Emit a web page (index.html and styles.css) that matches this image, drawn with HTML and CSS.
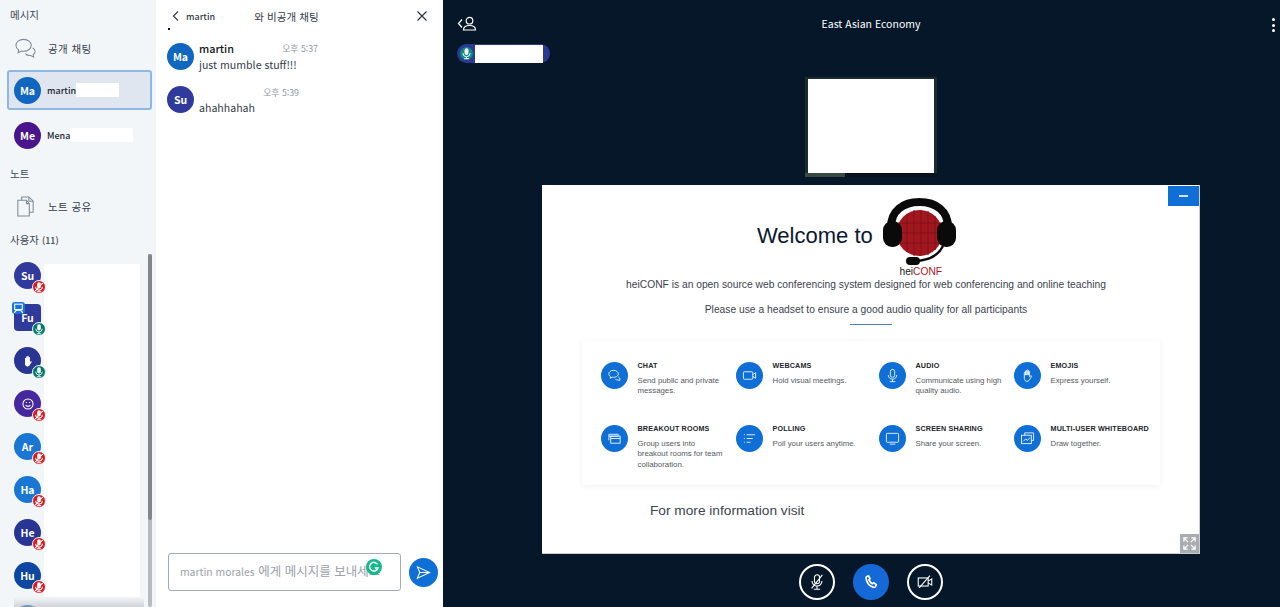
FILE: index.html
```html
<!DOCTYPE html>
<html lang="ko">
<head>
  <meta charset="UTF-8">
  <title>East Asian Economy</title>
  <link rel="stylesheet" href="styles.css">
</head>
<body>
  <svg class="defs" width="0" height="0">
    <symbol id="mic" viewBox="0 0 16 16">
      <rect x="5.6" y="1.5" width="4.8" height="8.4" rx="2.4" fill="currentColor"/>
      <path d="M3.6 7.6a4.4 4.4 0 0 0 8.8 0M8 12v2.4M5 14.4h6" fill="none" stroke="currentColor" stroke-width="1.2"/>
    </symbol>
    <symbol id="mic-off" viewBox="0 0 16 16">
      <rect x="5.6" y="1.5" width="4.8" height="8.4" rx="2.4" fill="currentColor"/>
      <path d="M3.6 7.6a4.4 4.4 0 0 0 8.8 0M8 12v2.4M5 14.4h6M3 13.5 13 2.5" fill="none" stroke="currentColor" stroke-width="1.4"/>
    </symbol>
    <symbol id="hand" viewBox="0 0 16 16">
      <path d="M4.6 8.6V5a.7.7 0 0 1 1.400 0v2.600V3.400a.7.7 0 0 1 1.400 0v4.200V2.800a.7.7 0 0 1 1.400 0v4.800V4a.7.7 0 0 1 1.400 0v5.400l1-1c.6-.6 1.500.1 1 .8l-2.500 4c-.5.7-1.200 1-2.100 1-2 0-3-1.300-3-3.200z"/>
    </symbol>
  </svg>

  <aside class="sidebar">
    <h2 class="side-title">메시지</h2>
    <div class="side-link">
      <svg class="side-icon" viewBox="0 0 24 24" fill="none" stroke="#7f8b98" stroke-width="1.1">
        <path d="M10 2.500c-4.600 0-8 2.800-8 6.200 0 2 1.100 3.700 2.900 4.800l-.6 3 3.400-1.900c.8.2 1.500.3 2.300.3 4.600 0 8-2.800 8-6.200S14.600 2.500 10 2.500z"/>
        <path d="M19.500 11.500c1.500.8 2.500 2.100 2.500 3.600 0 1.300-.7 2.400-1.900 3.200l.4 2.700-3-1.700c-2.300.3-4.500-.5-5.600-2"/>
      </svg>
      <span>공개 채팅</span>
    </div>
    <div class="chat-row active">
      <div class="avatar c-blue">Ma</div>
      <span class="chat-name">martin</span>
      <span class="blank blank-a"></span>
    </div>
    <div class="chat-row">
      <div class="avatar c-purple">Me</div>
      <span class="chat-name">Mena</span>
      <span class="blank blank-b"></span>
    </div>
    <h2 class="side-title notes-title">노트</h2>
    <div class="side-link notes-link">
      <svg class="side-icon" viewBox="0 0 24 24" fill="none" stroke="#7f8b98" stroke-width="1.1">
        <path d="M4 5.500h9l3 3.500v13H4z"/>
        <path d="M8 5.500V2h7.500L20 6.500V18h-4"/>
        <path d="M15.500 2v4.500H20M13 5.500V9h3"/>
      </svg>
      <span>노트 공유</span>
    </div>
    <h2 class="side-title users-title">사용자 <span class="count">(11)</span></h2>
    <div class="users">
      <div class="user-icons">
        <div class="avatar c-indigo">Su<svg class="badge off"><use href="#mic-off"/></svg></div>
        <div class="avatar c-indigo square">Fu
          <span class="presenter">
            <svg viewBox="0 0 12 12" fill="none" stroke="#fff" stroke-width="1"><rect x="2.500" y="2" width="7" height="5"/><path d="M2 10l2-2.500h4l2 2.500"/></svg>
          </span>
          <svg class="badge on"><use href="#mic"/></svg>
        </div>
        <div class="avatar c-navy">
          <svg class="avatar-glyph hand-fill"><use href="#hand"/></svg>
          <svg class="badge on"><use href="#mic"/></svg>
        </div>
        <div class="avatar c-violet">
          <svg class="avatar-glyph" viewBox="0 0 16 16" fill="none" stroke="#fff" stroke-width="1.2"><circle cx="8" cy="8" r="5.8"/><path d="M5.3 9.300c1.300 1.900 4.100 1.900 5.400 0M5.600 6.300h1.200M9.200 6.300h1.200"/></svg>
          <svg class="badge off"><use href="#mic-off"/></svg>
        </div>
        <div class="avatar c-sky">Ar<svg class="badge off"><use href="#mic-off"/></svg></div>
        <div class="avatar c-sky">Ha<svg class="badge off"><use href="#mic-off"/></svg></div>
        <div class="avatar c-navy">He<svg class="badge off"><use href="#mic-off"/></svg></div>
        <div class="avatar c-deep">Hu<svg class="badge off"><use href="#mic-off"/></svg></div>
        <div class="avatar c-blue"></div>
      </div>
      <div class="user-names"></div>
    </div>
    <div class="list-fade"></div>
    <div class="scrollbar"><div class="scroll-thumb"></div></div>
  </aside>

  <section class="chat">
    <header class="chat-head">
      <svg class="chat-back" viewBox="0 0 10 12" fill="none" stroke="#333d4a" stroke-width="1.2"><path d="M7 1.500 2.500 6 7 10.500"/></svg>
      <span class="chat-peer">martin</span>
      <span class="chat-title">와 비공개 채팅</span>
      <svg class="chat-close" viewBox="0 0 12 12" fill="none" stroke="#26303c" stroke-width="1.1"><path d="M1.500 1.500l9 9M10.500 1.500l-9 9"/></svg>
    </header>
    <div class="chat-dot"></div>
    <div class="messages">
      <div class="msg">
        <div class="avatar c-blue">Ma</div>
        <div class="msg-body">
          <div class="msg-meta"><strong>martin</strong><time>오후 5:37</time></div>
          <p>just mumble stuff!!!</p>
        </div>
      </div>
      <div class="msg msg-anon">
        <div class="avatar c-indigo">Su</div>
        <div class="msg-body">
          <div class="msg-meta"><strong></strong><time>오후 5:39</time></div>
          <p>ahahhahah</p>
        </div>
      </div>
    </div>
    <form class="composer">
      <div class="composer-box">
        <span class="placeholder"><span class="latin">martin morales</span> 에게 메시지를 보내세요</span>
        <span class="grammarly">
          <svg viewBox="0 0 16 16" fill="none" stroke="#fff" stroke-width="1.5"><path d="M11.500 5.300A4.300 4.300 0 1 0 12 9H8.800"/></svg>
        </span>
      </div>
      <button class="send" type="button">
        <svg viewBox="0 0 16 16" fill="none" stroke="#fff" stroke-width="1.1"><path d="M1.500 2 14.500 8l-13 6 2.500-6zM4 8h10.500"/></svg>
      </button>
    </form>
  </section>

  <main class="stage">
    <header class="stage-head">
      <svg class="users-toggle" viewBox="0 0 20 15" fill="none" stroke="#fff" stroke-width="1.2">
        <path d="M5 3.500 1.500 7.500 5 11.500"/>
        <circle cx="12.500" cy="4.700" r="3.300"/>
        <path d="M6.500 14c0-3 2.500-4.500 6-4.500s6 1.500 6 4.500z"/>
      </svg>
      <h1>East Asian Economy</h1>
      <div class="kebab"><i></i><i></i><i></i></div>
    </header>
    <div class="talker">
      <span class="talker-mic"><svg><use href="#mic"/></svg></span>
      <span class="talker-name"></span>
    </div>
    <div class="webcam"><div class="webcam-feed"></div></div>
    <div class="slide">
      <button class="minimize" type="button"><span></span></button>
      <div class="welcome">
        <span class="welcome-text">Welcome to</span>
        <div class="logo">
          <svg viewBox="0 0 74 70" width="74" height="70">
            <circle cx="36.500" cy="36" r="23" fill="#a3161f"/>
            <path d="M24 17v38M31 13v46M38 13v46M45 14v44M52 19v34M15 26h43M14 36h45M16 46h41" stroke="#7c1219" stroke-width="1"/>
            <path d="M8 30C8 14 20 5 36.500 5S65 14 65 30" fill="none" stroke="#0a0a0a" stroke-width="8"/>
            <rect x="0" y="24" width="19" height="26" rx="9" fill="#0a0a0a"/>
            <rect x="54" y="24" width="19" height="26" rx="9" fill="#0a0a0a"/>
            <path d="M60 49C54 61 42 64 30 64" fill="none" stroke="#0a0a0a" stroke-width="2.5"/>
            <rect x="23" y="60" width="14" height="8" rx="4" fill="#0a0a0a"/>
          </svg>
          <div class="logo-name">hei<b>CONF</b></div>
        </div>
      </div>
      <p class="lead">heiCONF is an open source web conferencing system designed for web conferencing and online teaching</p>
      <p class="lead lead-second">Please use a headset to ensure a good audio quality for all participants</p>
      <div class="rule"></div>
      <div class="features">
        <div class="feature">
          <span class="feature-icon">
            <svg viewBox="0 0 16 16"><path d="M7 2.500c-3 0-5 1.700-5 3.800 0 1.200.7 2.200 1.700 2.900l-.3 1.800 2.100-1.200c3.400.5 6.500-1 6.500-3.500 0-2.100-2-3.800-5-3.800zM12 9.500c1 .5 1.800 1.300 1.800 2.200l-.4 1.800-1.800-.9c-1 .2-2 0-2.700-.7"/></svg>
          </span>
          <div><h3>CHAT</h3><p>Send public and private messages.</p></div>
        </div>
        <div class="feature">
          <span class="feature-icon">
            <svg viewBox="0 0 16 16"><rect x="1.500" y="4" width="10" height="8" rx="1"/><path d="M11.500 7 14.500 5v6l-3-2"/></svg>
          </span>
          <div><h3>WEBCAMS</h3><p>Hold visual meetings.</p></div>
        </div>
        <div class="feature">
          <span class="feature-icon">
            <svg viewBox="0 0 16 16"><rect x="5.700" y="1.500" width="4.600" height="8.500" rx="2.300"/><path d="M3.500 7.500a4.500 4.500 0 0 0 9 0M8 12v2.500M5 14.500h6"/></svg>
          </span>
          <div><h3>AUDIO</h3><p>Communicate using high quality audio.</p></div>
        </div>
        <div class="feature">
          <span class="feature-icon">
            <svg><use href="#hand"/></svg>
          </span>
          <div><h3>EMOJIS</h3><p>Express yourself.</p></div>
        </div>
        <div class="feature">
          <span class="feature-icon">
            <svg viewBox="0 0 16 16"><path d="M2 10V3.500h10V5"/><path d="M2 5.500h10"/><rect x="4" y="5.500" width="10" height="7.500"/><path d="M4 8h10"/></svg>
          </span>
          <div><h3>BREAKOUT ROOMS</h3><p>Group users into breakout rooms for team collaboration.</p></div>
        </div>
        <div class="feature">
          <span class="feature-icon">
            <svg viewBox="0 0 16 16"><path d="M5 4h9M5 8h6.500M5 12h4M2 4h1M2 8h1M2 12h1"/></svg>
          </span>
          <div><h3>POLLING</h3><p>Poll your users anytime.</p></div>
        </div>
        <div class="feature">
          <span class="feature-icon">
            <svg viewBox="0 0 16 16"><rect x="1.500" y="2.500" width="13" height="9.500" rx=".8"/><path d="M5 14h6"/></svg>
          </span>
          <div><h3>SCREEN SHARING</h3><p>Share your screen.</p></div>
        </div>
        <div class="feature">
          <span class="feature-icon">
            <svg viewBox="0 0 16 16"><path d="M5 4.500V2h9.500v8H12"/><rect x="1.500" y="4.500" width="10.500" height="9"/><path d="M3.500 11l2.500-2.500 2 1.500 2.500-3"/></svg>
          </span>
          <div><h3>MULTI-USER WHITEBOARD</h3><p>Draw together.</p></div>
        </div>
      </div>
      <p class="more">For more information visit</p>
      <button class="fullscreen" type="button">
        <svg viewBox="0 0 16 16" fill="none" stroke="#fff" stroke-width="1.3"><path d="M2 6V2h4M2 2l4.500 4.500M10 2h4v4M14 2 9.500 6.500M2 10v4h4M2 14l4.500-4.500M10 14h4v-4M14 14 9.500 9.500"/></svg>
      </button>
    </div>
    <div class="actions">
      <button class="action" type="button">
        <svg viewBox="0 0 20 20" fill="none" stroke="#fff" stroke-width="1.2"><rect x="7.200" y="2" width="5.600" height="10" rx="2.800"/><path d="M4.500 9a5.500 5.500 0 0 0 11 0M10 14.500V18M6.500 18h7M4 17 16 2"/></svg>
      </button>
      <button class="action action-primary" type="button">
        <svg viewBox="0 0 20 20" fill="none" stroke="#fff" stroke-width="1.9" stroke-linecap="round"><path d="M5.500 3.800 7.300 3.300l1.600 3-1.200 1.300c.7 1.700 2 3.200 3.800 4.300l1.400-1 2.900 1.900-.6 1.900c-.4 1-1.400 1.400-2.400 1.100C8.500 14.600 5.200 10.700 4.500 6c-.1-1 .2-1.800 1-2.200z"/></svg>
      </button>
      <button class="action" type="button">
        <svg viewBox="0 0 20 20" fill="none" stroke="#fff" stroke-width="1.2"><rect x="2.500" y="5.500" width="11" height="9"/><path d="M13.500 9l4-2.500v7l-4-2.500M3.500 16.500 15.500 3"/></svg>
      </button>
    </div>
  </main>
</body>
</html>
```

FILE: styles.css
```css
* {
  box-sizing: border-box;
}
body {
  margin: 0;
  height: 100vh;
  overflow: hidden;
  display: flex;
  font-family: "Noto Sans CJK KR", "Noto Sans", sans-serif;
  color: #26303c;
  background: #06172a;
}
.defs {
  position: absolute;
}
h1, h2, h3, p {
  margin: 0;
  font-weight: 400;
}

/* sidebar */
.sidebar {
  position: relative;
  flex: 0 0 156px;
  height: 100%;
  overflow: hidden;
  background: #f3f6f9;
  padding-top: 7px;
}
.side-title {
  font-size: 10.5px;
  line-height: 15px;
  padding-left: 10px;
  color: #3e4853;
}
.side-link {
  display: flex;
  align-items: center;
  height: 24px;
  margin-top: 14px;
  padding-left: 14px;
  font-size: 10.5px;
  color: #333d4a;
}
.side-link span {
  margin-left: 11px;
  letter-spacing: 0.4px;
}
.side-icon {
  width: 23px;
  height: 23px;
}
.chat-row {
  display: flex;
  align-items: center;
  height: 40px;
  width: 145px;
  margin: 5px 0 0 7px;
  padding-left: 6px;
  border: 1px solid transparent;
  border-radius: 3px;
}
.chat-row.active {
  margin-top: 10px;
  background: #dfe6ef;
  border: 2px solid #8fb7e6;
  padding-left: 5px;
}
.chat-name {
  margin-left: 6px;
  font-size: 9px;
  font-weight: 500;
  color: #1e2730;
}
.blank {
  display: block;
  height: 14px;
  background: #fff;
}
.blank-a {
  width: 43px;
}
.blank-b {
  width: 63px;
}
.notes-title {
  margin-top: 10.5px;
}
.notes-link {
  margin-top: 13.5px;
}
.users-title {
  margin-top: 14px;
}
.count {
  font-size: 9px;
  font-weight: 500;
}
.users {
  display: flex;
  margin-top: 13.5px;
  height: 380px;
  padding-left: 14px;
}
.user-icons {
  flex: 0 0 30px;
  display: flex;
  flex-direction: column;
  gap: 15.9px;
}
.user-names {
  width: 96px;
  height: 333px;
  background: #fff;
  margin-top: 2px;
}
.avatar {
  position: relative;
  flex: 0 0 27px;
  width: 27px;
  height: 27px;
  border-radius: 50%;
  display: flex;
  align-items: center;
  justify-content: center;
  color: #fff;
  font-size: 10.5px;
  font-weight: 700;
}
.avatar.square {
  border-radius: 4px;
}
.c-blue { background: #1166c0; }
.c-purple { background: #4a148c; }
.c-indigo { background: #303a9c; }
.c-navy { background: #283593; }
.c-violet { background: #4527a0; }
.c-sky { background: #1976d2; }
.c-deep { background: #0d47a1; }
.avatar-glyph {
  width: 14px;
  height: 14px;
}
.hand-fill {
  fill: #fff;
}
.badge {
  position: absolute;
  right: -5px;
  bottom: -5px;
  width: 14px;
  height: 14px;
  border-radius: 50%;
  border: 1px solid #f3f6f9;
  color: #fff;
}
.badge.off {
  background: #d71920;
}
.badge.on {
  background: #00796b;
}
.presenter {
  position: absolute;
  left: -2px;
  top: -2px;
  width: 13px;
  height: 12px;
  border-radius: 3px;
  background: #1b74dc;
}
.presenter svg {
  display: block;
}
.list-fade {
  position: absolute;
  left: 14px;
  right: 12px;
  bottom: 0;
  height: 10px;
  background: linear-gradient(#f3f6f900, #b7bcc299);
}
.scrollbar {
  position: absolute;
  left: 148px;
  top: 254px;
  bottom: 0;
  width: 4px;
  border-radius: 2px;
  background: #b8bbc1;
}
.scroll-thumb {
  height: 266px;
  border-radius: 2px;
  background: #83878d;
}

/* private chat */
.chat {
  position: relative;
  flex: 0 0 287px;
  height: 100%;
  display: flex;
  flex-direction: column;
  background: #fff;
}
.chat-head {
  position: relative;
  display: flex;
  align-items: center;
  height: 32px;
  padding-left: 15px;
  font-size: 10.5px;
  color: #333d4a;
}
.chat-back {
  width: 10px;
  height: 12px;
}
.chat-peer {
  margin-left: 5px;
  font-size: 9px;
  font-weight: 500;
}
.chat-title {
  margin-left: 39px;
  letter-spacing: 0.1px;
}
.chat-close {
  position: absolute;
  right: 15px;
  top: 10px;
  width: 12px;
  height: 12px;
}
.chat-dot {
  position: absolute;
  left: 12px;
  top: 28px;
  width: 2px;
  height: 2px;
  background: #111;
}
.messages {
  flex: 1;
  padding: 11px 0 0 11px;
}
.msg {
  display: flex;
  gap: 5px;
  height: 30px;
  margin-bottom: 13px;
}
.msg-body {
  width: 119px;
}
.msg-meta {
  display: flex;
  justify-content: space-between;
  align-items: center;
  height: 10px;
  margin-bottom: 4px;
}
.msg-meta strong {
  font-size: 10.8px;
  font-weight: 500;
  color: #101820;
}
.msg-meta time {
  font-size: 8.8px;
  color: #8b98a7;
}
.msg-anon .msg-body {
  width: 100px;
}
.msg-anon .msg-meta {
  margin-top: 1px;
  margin-bottom: 3px;
}
.msg p {
  font-size: 10.6px;
  line-height: 16px;
  color: #333d4a;
  white-space: nowrap;
}
.composer {
  display: flex;
  align-items: center;
  gap: 8px;
  padding: 0 0 16px 12px;
}
.composer-box {
  position: relative;
  width: 233px;
  height: 38px;
  padding: 8px 0 0 11px;
  border: 1px solid #a2acb8;
  border-radius: 3px;
  overflow: hidden;
  font-size: 12.5px;
  line-height: 18px;
}
.placeholder {
  color: #9aa1a9;
  white-space: nowrap;
}
.latin {
  font-size: 10.4px;
}
.grammarly {
  position: absolute;
  left: 197px;
  top: 5px;
  width: 16px;
  height: 16px;
  border-radius: 50%;
  background: #15b98b;
}
.grammarly svg {
  display: block;
}
.send {
  width: 29px;
  height: 29px;
  padding: 7px;
  border: none;
  border-radius: 50%;
  background: #0f6fd6;
}
.send svg {
  display: block;
}

/* presentation side */
.stage {
  flex: 1;
  height: 100%;
  display: flex;
  flex-direction: column;
  background: #06172a;
  color: #fff;
}
.stage-head {
  position: relative;
  display: flex;
  justify-content: center;
  align-items: center;
  height: 44px;
  padding: 3px 0 0 19px;
}
.stage-head h1 {
  font-size: 10.5px;
}
.users-toggle {
  position: absolute;
  left: 14px;
  top: 16px;
  width: 20px;
  height: 15px;
}
.kebab {
  position: absolute;
  right: 5px;
  top: 18px;
  display: flex;
  flex-direction: column;
  gap: 2.5px;
}
.kebab i {
  display: block;
  width: 3px;
  height: 3px;
  background: #fff;
  border-radius: 50%;
}
.talker {
  display: flex;
  align-items: center;
  align-self: flex-start;
  width: 93px;
  height: 19px;
  margin-left: 14px;
  padding-left: 3px;
  border-radius: 10px;
  background: #2b3a8f;
}
.talker-mic {
  width: 13px;
  height: 13px;
  border-radius: 50%;
  background: #0f8a86;
  color: #fff;
}
.talker-mic svg {
  display: block;
  width: 13px;
  height: 13px;
}
.talker-name {
  width: 68px;
  height: 18px;
  margin-left: 2px;
  background: #fff;
}
.webcam {
  align-self: flex-start;
  width: 132px;
  height: 100px;
  margin: 14px 0 0 362px;
  padding: 2px 3px 4px;
  background: linear-gradient(90deg, #3a4844 0 30%, #08131d 30% 100%) bottom / 100% 4px no-repeat, #1c2b2c;
}
.webcam-feed {
  height: 100%;
  background: #fff;
}
.slide {
  position: relative;
  align-self: flex-start;
  width: 658px;
  height: 369px;
  margin: 8px 0 0 99px;
  background: #fff;
  color: #0b1730;
  font-family: "Liberation Sans", Arial, sans-serif;
  text-align: center;
  border-right: 1px solid #c9ccd0;
  border-bottom: 1px solid #c9ccd0;
}
.minimize {
  position: absolute;
  right: 0;
  top: 1px;
  width: 31px;
  height: 20px;
  padding: 0;
  border: none;
  background: #0f6fd6;
}
.minimize span {
  display: block;
  width: 9px;
  height: 1.5px;
  margin: 0 auto;
  background: #d6e6fa;
}
.welcome {
  display: flex;
  align-items: flex-start;
  padding: 12px 0 0 215px;
  height: 93px;
}
.welcome-text {
  margin-top: 25px;
  font-size: 22px;
  line-height: 27px;
  white-space: nowrap;
}
.logo {
  margin-left: 10px;
  width: 74px;
}
.logo svg {
  display: block;
}
.logo-name {
  margin-top: -1px;
  margin-left: 2px;
  font-size: 10.2px;
  line-height: 12px;
  color: #222;
}
.logo-name b {
  font-weight: 400;
  color: #b3141d;
}
.lead {
  font-size: 10.27px;
  line-height: 13px;
  color: #3b4450;
  margin-left: -9px;
  white-space: nowrap;
}
.lead-second {
  margin-top: 12px;
}
.rule {
  width: 42px;
  height: 1px;
  margin: 8px 0 0 308px;
  background: #4a7fc4;
}
.features {
  display: grid;
  grid-template-columns: 135px 143px 135px 1fr;
  grid-auto-rows: 63px;
  width: 578px;
  height: 144px;
  margin: 16px 0 0 40px;
  padding: 21px 0 0 19px;
  text-align: left;
  box-shadow: 0 1px 6px #0000000f;
}
.feature {
  display: flex;
  gap: 9.5px;
}
.feature-icon {
  flex: 0 0 27px;
  width: 27px;
  height: 27px;
  padding: 6px;
  border-radius: 50%;
  background: #0f6fd6;
}
.feature-icon svg {
  display: block;
  width: 15px;
  height: 15px;
  fill: none;
  stroke: #fff;
  stroke-width: 0.9;
}
.feature h3 {
  margin-top: -1px;
  font-size: 7.2px;
  line-height: 9px;
  font-weight: 700;
  letter-spacing: 0.15px;
  color: #22262c;
  white-space: nowrap;
}
.feature p {
  margin-top: 5.5px;
  width: 89px;
  font-size: 7.8px;
  line-height: 10.8px;
  color: #555a60;
}
.more {
  margin: 17px 0 0 108px;
  text-align: left;
  font-size: 13.7px;
  line-height: 17px;
  color: #3b4450;
}
.fullscreen {
  position: absolute;
  right: 0;
  bottom: 0;
  width: 19px;
  height: 19px;
  padding: 2px;
  border: none;
  background: #a9acb0;
}
.fullscreen svg {
  display: block;
}
.actions {
  display: flex;
  justify-content: center;
  gap: 18px;
  margin: 10px 0 0 18px;
}
.action {
  width: 36px;
  height: 36px;
  padding: 7px;
  border: 2px solid #fff;
  border-radius: 50%;
  background: transparent;
}
.action svg {
  display: block;
}
.action-primary {
  border: none;
  padding: 9px;
  background: #1569d6;
}
```
